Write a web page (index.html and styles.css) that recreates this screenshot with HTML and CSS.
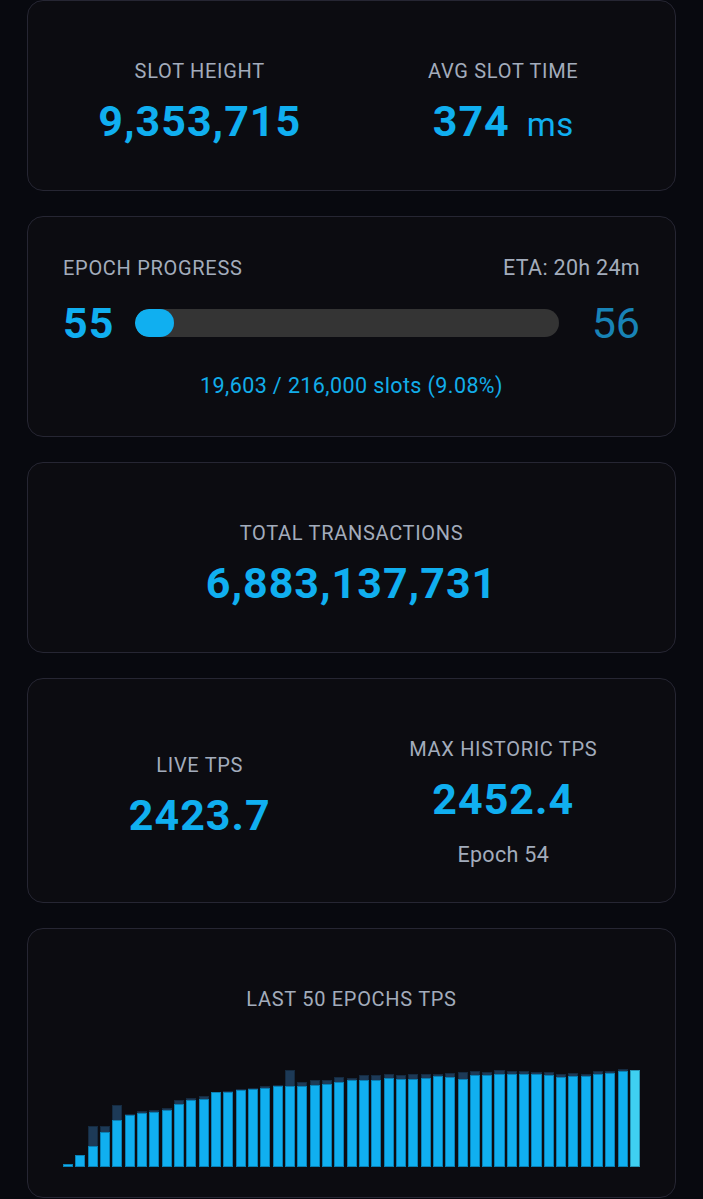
FILE: index.html
```html
<!DOCTYPE html>
<html>
<head>
    <meta charset="UTF-8">
    <title>Network Stats</title>
    <link rel="stylesheet" href="styles.css">
</head>
<body>
<div class="stats">
    <div class="card card-pair">
        <div class="stat">
            <div class="label">SLOT HEIGHT</div>
            <div class="value">9,353,715</div>
        </div>
        <div class="stat">
            <div class="label">AVG SLOT TIME</div>
            <div class="value">374<span class="unit">ms</span></div>
        </div>
    </div>

    <div class="card card-epoch">
        <div class="epoch-head">
            <div class="label">EPOCH PROGRESS</div>
            <div class="eta">ETA: 20h 24m</div>
        </div>
        <div class="epoch-row">
            <div class="value">55</div>
            <div class="track"><div class="track-fill" style="width:9.08%"></div></div>
            <div class="value next">56</div>
        </div>
        <div class="slots">19,603 / 216,000 slots (9.08%)</div>
    </div>

    <div class="card">
        <div class="stat">
            <div class="label">TOTAL TRANSACTIONS</div>
            <div class="value">6,883,137,731</div>
        </div>
    </div>

    <div class="card card-pair card-tps">
        <div class="stat live">
            <div class="label">LIVE TPS</div>
            <div class="value">2423.7</div>
        </div>
        <div class="stat">
            <div class="label">MAX HISTORIC TPS</div>
            <div class="value">2452.4</div>
            <div class="note">Epoch 54</div>
        </div>
    </div>

    <div class="card card-chart">
        <div class="label">LAST 50 EPOCHS TPS</div>
        <div class="chart">
            <div class="bar" style="height:3px"><div class="fill" style="height:3px"></div></div>
            <div class="bar" style="height:12px"><div class="fill" style="height:12px"></div></div>
            <div class="bar" style="height:41px"><div class="fill" style="height:21px"></div></div>
            <div class="bar" style="height:41px"><div class="fill" style="height:35px"></div></div>
            <div class="bar" style="height:62px"><div class="fill" style="height:47px"></div></div>
            <div class="bar" style="height:53px"><div class="fill" style="height:52px"></div></div>
            <div class="bar" style="height:56px"><div class="fill" style="height:54px"></div></div>
            <div class="bar" style="height:57px"><div class="fill" style="height:55px"></div></div>
            <div class="bar" style="height:59px"><div class="fill" style="height:57px"></div></div>
            <div class="bar" style="height:67px"><div class="fill" style="height:63px"></div></div>
            <div class="bar" style="height:69px"><div class="fill" style="height:67px"></div></div>
            <div class="bar" style="height:71px"><div class="fill" style="height:68px"></div></div>
            <div class="bar" style="height:75px"><div class="fill" style="height:75px"></div></div>
            <div class="bar" style="height:76px"><div class="fill" style="height:75px"></div></div>
            <div class="bar" style="height:78px"><div class="fill" style="height:77px"></div></div>
            <div class="bar" style="height:79px"><div class="fill" style="height:78px"></div></div>
            <div class="bar" style="height:81px"><div class="fill" style="height:79px"></div></div>
            <div class="bar" style="height:82px"><div class="fill" style="height:81px"></div></div>
            <div class="bar" style="height:97px"><div class="fill" style="height:81px"></div></div>
            <div class="bar" style="height:85px"><div class="fill" style="height:81px"></div></div>
            <div class="bar" style="height:87px"><div class="fill" style="height:82px"></div></div>
            <div class="bar" style="height:87px"><div class="fill" style="height:83px"></div></div>
            <div class="bar" style="height:90px"><div class="fill" style="height:85px"></div></div>
            <div class="bar" style="height:89px"><div class="fill" style="height:87px"></div></div>
            <div class="bar" style="height:92px"><div class="fill" style="height:87px"></div></div>
            <div class="bar" style="height:92px"><div class="fill" style="height:87px"></div></div>
            <div class="bar" style="height:93px"><div class="fill" style="height:89px"></div></div>
            <div class="bar" style="height:92px"><div class="fill" style="height:88px"></div></div>
            <div class="bar" style="height:93px"><div class="fill" style="height:88px"></div></div>
            <div class="bar" style="height:93px"><div class="fill" style="height:89px"></div></div>
            <div class="bar" style="height:93px"><div class="fill" style="height:91px"></div></div>
            <div class="bar" style="height:94px"><div class="fill" style="height:90px"></div></div>
            <div class="bar" style="height:95px"><div class="fill" style="height:88px"></div></div>
            <div class="bar" style="height:96px"><div class="fill" style="height:92px"></div></div>
            <div class="bar" style="height:95px"><div class="fill" style="height:92px"></div></div>
            <div class="bar" style="height:97px"><div class="fill" style="height:93px"></div></div>
            <div class="bar" style="height:96px"><div class="fill" style="height:93px"></div></div>
            <div class="bar" style="height:96px"><div class="fill" style="height:93px"></div></div>
            <div class="bar" style="height:95px"><div class="fill" style="height:93px"></div></div>
            <div class="bar" style="height:95px"><div class="fill" style="height:92px"></div></div>
            <div class="bar" style="height:93px"><div class="fill" style="height:90px"></div></div>
            <div class="bar" style="height:94px"><div class="fill" style="height:91px"></div></div>
            <div class="bar" style="height:93px"><div class="fill" style="height:91px"></div></div>
            <div class="bar" style="height:96px"><div class="fill" style="height:93px"></div></div>
            <div class="bar" style="height:96px"><div class="fill" style="height:94px"></div></div>
            <div class="bar" style="height:98px"><div class="fill" style="height:96px"></div></div>
            <div class="bar current" style="height:97px"><div class="fill" style="height:97px"></div></div>
        </div>
    </div>
</div>
</body>
</html>
```

FILE: styles.css
```css
body{margin:0; background:#08090f; font-family:Roboto, "Noto Sans", sans-serif; color:#a3acbc;}
.stats{display:flex; flex-direction:column; gap:25px; padding:0 27px 40px 27px;}

.card{
    background:#0c0c11; border:1px solid #262633; border-radius:16px;
    padding:58px 35px 44px 35px;
    text-align:center;
}
.card-pair{display:grid; grid-template-columns:1fr 1fr; align-items:center; padding:58px 20px 44px 20px;}
.card-tps{padding-bottom:34px;}
.card-tps .live{padding-bottom:13px;}

.label{font-size:20px; line-height:24px; letter-spacing:0.7px; color:#a3acbc;}
.value{font-size:43px; line-height:50px; font-weight:700; letter-spacing:1px; color:#10aff0; margin-top:13px;}
.unit{font-size:33px; line-height:1; font-weight:400; letter-spacing:0.5px; margin-left:17px;}
.note{font-size:21.5px; line-height:26px; letter-spacing:0.3px; color:#a3acbc; margin-top:18px;}

/* epoch progress */
.card-epoch{padding-top:39px; padding-bottom:38px;}
.epoch-head{display:flex; justify-content:space-between; align-items:center;}
.eta{font-size:21.5px; line-height:24px; letter-spacing:0.3px; color:#a3acbc;}
.epoch-row{display:flex; align-items:center; margin-top:18px;}
.epoch-row .value{margin-top:0;}
.epoch-row .next{font-weight:400; letter-spacing:0; color:#1883b6; margin-left:33px;}
.track{flex:1; height:28px; border-radius:14px; background:#343434; margin-left:21px; overflow:hidden;}
.track-fill{height:100%; border-radius:14px; background:#10aff0;}
.slots{font-size:21.5px; line-height:24px; letter-spacing:0.4px; color:#12ade9; margin-top:26px;}

/* chart */
.card-chart{padding-bottom:30px;}
.chart{display:flex; align-items:flex-end; gap:2.3px; height:120px; margin-top:36px;}
.bar{flex:1; display:flex; align-items:flex-end; background:#1d3a57; box-shadow:inset 0 0 0 1px rgba(0,0,0,0.25);}
.bar .fill{width:100%; background:#10aff0; box-shadow:inset 0 0 0 1px rgba(0,40,70,0.35);}
.bar.current .fill{background:#3fd0f1;}
```
